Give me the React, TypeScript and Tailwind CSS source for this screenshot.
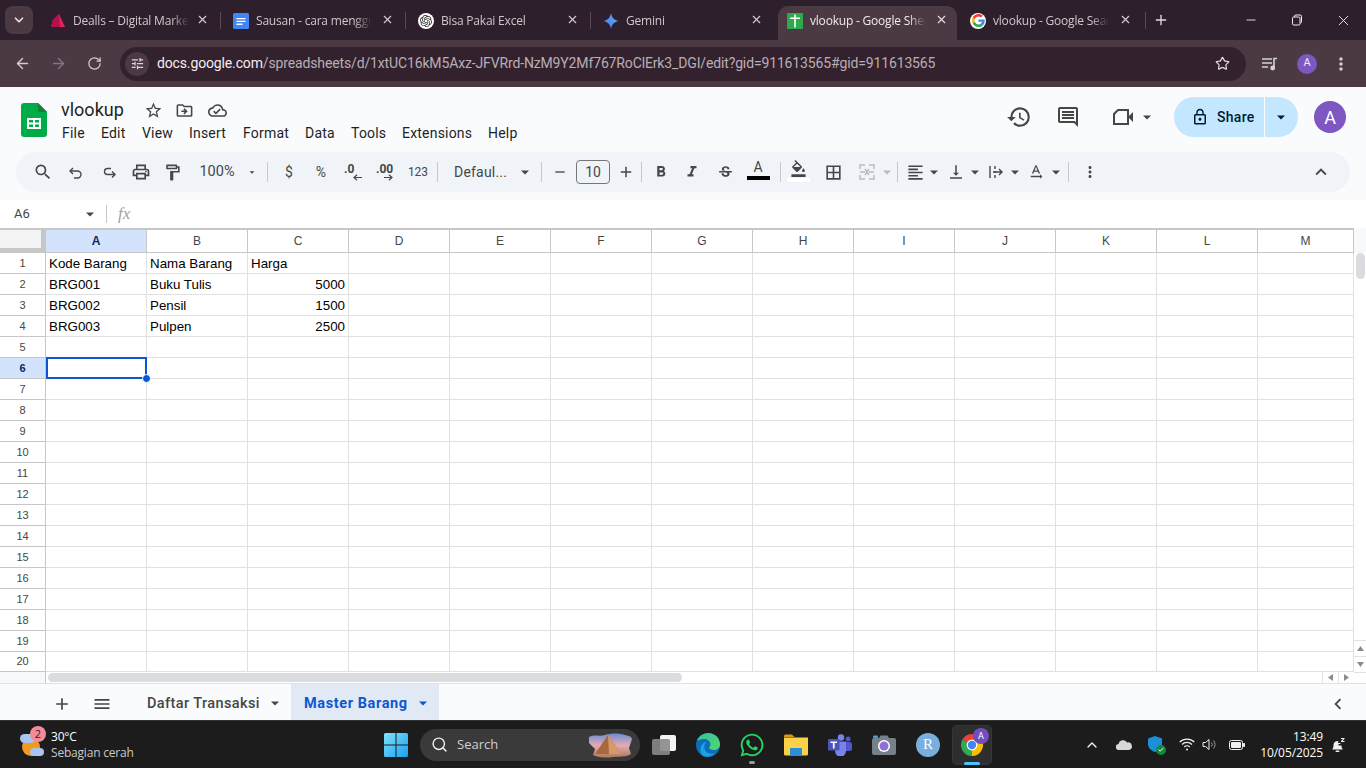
import React from 'react';
import { X, Plus, Minus, ChevronDown, ArrowLeft, ArrowRight, RotateCw, Star, ChevronUp, Search } from 'lucide-react';
import {
  MdOutlinePrint, MdOutlineFormatPaint, MdFormatBold, MdFormatItalic, MdStrikethroughS, MdOutlineFormatColorFill,
  MdBorderAll, MdFormatAlignLeft, MdVerticalAlignBottom, MdMoreVert, MdHistory,
  MdLockOutline, MdAdd, MdMenu, MdChevronLeft, MdStarBorder, MdOutlineDriveFileMove, MdOutlineCloudDone, MdSearch,
  MdTextRotationNone, MdOutlineTune, MdOutlineInsertComment, MdRemove, MdExpandLess,
} from 'react-icons/md';
import { FaWhatsapp } from 'react-icons/fa';
import { SiOpenai } from 'react-icons/si';

const Caret = ({ color = '#444746', className = '' }: { color?: string; className?: string }) => (
  <svg width="10" height="5" viewBox="0 0 10 5" className={className}>
    <path d="M1 .5h8L5 4.500z" fill={color} />
  </svg>
);

const GoogleG = () => (
  <svg viewBox="0 0 48 48" className="w-full h-full">
    <path fill="#EA4335" d="M24 9.5c3.54 0 6.71 1.22 9.21 3.6l6.85-6.85C35.9 2.38 30.47 0 24 0 14.62 0 6.51 5.38 2.56 13.22l7.98 6.19C12.43 13.72 17.74 9.5 24 9.5z" />
    <path fill="#4285F4" d="M46.98 24.55c0-1.57-.15-3.09-.38-4.55H24v9.02h12.94c-.58 2.96-2.26 5.48-4.78 7.18l7.73 6c4.51-4.18 7.09-10.36 7.09-17.65z" />
    <path fill="#FBBC05" d="M10.53 28.59c-.48-1.45-.76-2.99-.76-4.59s.27-3.14.76-4.59l-7.98-6.19C.92 16.46 0 20.12 0 24c0 3.88.92 7.54 2.56 10.78l7.97-6.19z" />
    <path fill="#34A853" d="M24 48c6.48 0 11.93-2.13 15.89-5.81l-7.73-6c-2.15 1.45-4.92 2.3-8.16 2.3-6.26 0-11.57-4.22-13.47-9.91l-7.98 6.19C6.51 42.62 14.62 48 24 48z" />
  </svg>
);

const favicons: Record<string, React.ReactNode> = {
  dealls: (
    <svg width="16" height="16" viewBox="0 0 16 16">
      <path d="M9 1 L15 14 L1 14 L3 7z" fill="#e0245e" />
      <path d="M9 1 L10 14 L1 14 L3 7z" fill="#b3124a" />
    </svg>
  ),
  docs: (
    <svg width="16" height="16" viewBox="0 0 16 16">
      <rect width="16" height="16" rx="1.5" fill="#4285f4" />
      <path d="M3.5 5h9v1.3h-9zM3.5 7.8h9v1.3h-9zM3.5 10.6h6v1.3h-6z" fill="#fff" />
    </svg>
  ),
  gpt: (
    <div className="w-4 h-4 rounded-full bg-white flex items-center justify-center">
      <SiOpenai size={12} color="#2b2b2b" />
    </div>
  ),
  gemini: (
    <svg width="16" height="16" viewBox="0 0 16 16">
      <defs>
        <linearGradient id="gem" x1="0" y1="1" x2="1" y2="0">
          <stop offset="0" stopColor="#3f7fe8" />
          <stop offset="1" stopColor="#6aa5f5" />
        </linearGradient>
      </defs>
      <path d="M8 0c.6 4.5 3.2 7.3 8 8-4.8.7-7.4 3.5-8 8-.6-4.5-3.2-7.3-8-8 4.8-.7 7.4-3.5 8-8z" fill="url(#gem)" />
    </svg>
  ),
  sheets: (
    <svg width="16" height="16" viewBox="0 0 16 16">
      <rect width="16" height="16" rx="1" fill="#2fa84f" />
      <path d="M7.200 1.500h1.600v3H13v1.600H8.800V14.500H7.200V6.100H3V4.500h4.200z" fill="#fff" />
    </svg>
  ),
  google: (
    <div className="w-4 h-4 rounded-full bg-white p-[1.5px]">
      <GoogleG />
    </div>
  ),
};

const tabs = [
  { icon: 'dealls', title: 'Dealls – Digital Marketing', x: 13, close: 13 },
  { icon: 'docs', title: 'Sausan - cara menggunakan', x: 11, close: 13 },
  { icon: 'gpt', title: 'Bisa Pakai Excel', x: 11, close: 13 },
  { icon: 'gemini', title: 'Gemini', x: 11, close: 14 },
  { icon: 'sheets', title: 'vlookup - Google Sheets', x: 10, close: 14, active: true },
  { icon: 'google', title: 'vlookup - Google Search', x: 8, close: 15 },
];

const TabStrip = () => (
  <div className="h-[40px] bg-[#2e1f2c] flex items-start shrink-0 font-['Open_Sans',sans-serif]">
    <div className="ml-[5px] mt-[6px] w-[28px] h-[28px] rounded-[8px] bg-[#4b3944] flex items-center justify-center">
      <ChevronDown size={14} strokeWidth={3} color="#e8e0e4" />
    </div>
    <div className="ml-[4px] flex h-full">
      {tabs.map((t, i) => (
        <div key={t.title} className="relative w-[185px] h-[40px] flex items-center">
          {t.active && <div className="absolute left-[1px] right-[5px] top-[6px] bottom-0 bg-[#4b3944] rounded-t-[10px]" />}
          <div className="relative shrink-0 mt-[1px]" style={{ marginLeft: t.x }}>{favicons[t.icon]}</div>
          <span
            className={`relative ml-[7px] mt-[2px] w-[116px] whitespace-nowrap overflow-hidden text-[12px] tracking-[-0.2px] ${t.active ? 'text-[#f0e9ed]' : 'text-[#cfc6cb]'} [mask-image:linear-gradient(to_right,black_85%,transparent)]`}
          >
            {t.title}
          </span>
          <X size={13} strokeWidth={2} color={t.active ? '#e8e0e4' : '#d8d0d5'} className="absolute top-[13px]" style={{ right: t.close }} />
          {!t.active && i !== 3 && (
            <div className="absolute right-[1px] top-[12px] h-[17px] w-[1px] bg-[#5a4854]" />
          )}
        </div>
      ))}
    </div>
    <div className="ml-[6px] mt-[12px] w-[16px] h-[16px] flex items-center justify-center">
      <Plus size={16} strokeWidth={2} color="#e4dce1" />
    </div>
    <div className="ml-auto flex items-center h-[40px]">
      <div className="w-[46px] flex justify-center"><Minus size={14} strokeWidth={1.5} color="#f2f2f2" /></div>
      <div className="w-[46px] flex justify-center">
        <svg width="12" height="12" viewBox="0 0 12 12" fill="none" stroke="#f2f2f2" strokeWidth="1">
          <rect x="1.5" y="3" width="7.5" height="8" rx="1.2" />
          <path d="M3.5 3V2.2a1.2 1.2 0 0 1 1.2-1.2h4.6a1.2 1.2 0 0 1 1.2 1.2v5.6a1.2 1.2 0 0 1-1.2 1.2" />
        </svg>
      </div>
      <div className="w-[46px] flex justify-center"><X size={17} strokeWidth={1.3} color="#f2f2f2" /></div>
    </div>
  </div>
);

const AddressBar = () => (
  <div className="h-[47px] bg-[#4b3944] shrink-0 flex items-center">
    <div className="w-[44px] flex justify-center"><ArrowLeft size={17} strokeWidth={2} color="#d3cbd0" /></div>
    <div className="w-[28px] flex justify-center"><ArrowRight size={17} strokeWidth={2} color="#85757f" /></div>
    <div className="w-[44px] flex justify-center"><RotateCw size={15} strokeWidth={2} color="#d3cbd0" /></div>
    <div className="ml-[4px] w-[1126px] h-[34px] rounded-full bg-[#33222e] flex items-center">
      <div className="ml-[5px] w-[24px] h-[24px] rounded-full bg-[#4b3944] flex items-center justify-center">
        <MdOutlineTune size={15} color="#ded6da" />
      </div>
      <span className="ml-[8px] text-[14px] font-['Roboto',sans-serif] tracking-[-0.14px] whitespace-nowrap text-[#b9aeb4]">
        <span className="text-[#f3edf0]">docs.google.com</span>/spreadsheets/d/1xtUC16kM5Axz-JFVRrd-NzM9Y2Mf767RoClErk3_DGI/edit?gid=911613565#gid=911613565
      </span>
      <Star size={15} strokeWidth={2} color="#e0d8dd" className="ml-auto mr-[16px]" />
    </div>
    <div className="ml-[16px] w-[16px] flex justify-center">
      <svg width="16" height="14" viewBox="0 0 16 14" fill="none" stroke="#d8d0d5" strokeWidth="1.6">
        <path d="M0 2h10M0 6h10M0 10h6" />
        <path d="M12 11V1.5h3" />
        <circle cx="10.7" cy="11" r="1.6" fill="#d8d0d5" />
      </svg>
    </div>
    <div className="ml-[19px] w-[20px] h-[20px] rounded-full bg-[#7e57c2] text-[#f0e9f7] text-[11px] flex items-center justify-center font-['Roboto',sans-serif]">A</div>
    <div className="ml-[14px]"><MdMoreVert size={20} color="#d8d0d5" /></div>
  </div>
);

const SheetsLogo = () => (
  <svg width="26" height="34" viewBox="0 0 26 34">
    <path d="M3 0h14l9 9v22a3 3 0 0 1-3 3H3a3 3 0 0 1-3-3V3a3 3 0 0 1 3-3z" fill="#00ac47" />
    <path d="M17 0l9 9h-7a2 2 0 0 1-2-2z" fill="#188038" />
    <path d="M6 15h14v11H6z" fill="#fff" />
    <path d="M8 17h4v2.5H8zM14 17h4v2.5h-4zM8 21.5h4V24H8zM14 21.5h4V24h-4z" fill="#00ac47" />
  </svg>
);

const menus = [
  ['File', 39], ['Edit', 41], ['View', 47], ['Insert', 54], ['Format', 62],
  ['Data', 46], ['Tools', 51], ['Extensions', 86], ['Help', 40],
] as const;

const DocHeader = () => (
  <div className="h-[65px] bg-[#f9fbfd] shrink-0 flex font-['Roboto',sans-serif] text-[#1f1f1f]">
    <div className="ml-[21px] mt-[16px]"><SheetsLogo /></div>
    <div className="ml-[14px] mt-[10px]">
      <div className="flex items-center h-[26px]">
        <span className="text-[18px] leading-[26px] w-[84px]">vlookup</span>
        <MdStarBorder size={19} color="#444746" className="ml-[-1px]" />
        <MdOutlineDriveFileMove size={19} color="#444746" className="ml-[12px]" />
        <MdOutlineCloudDone size={19} color="#444746" className="ml-[14px]" />
      </div>
      <div className="flex ml-[1px] text-[14px] leading-[20px] tracking-[0.2px]">
        {menus.map(([m, w]) => (
          <span key={m} className="block" style={{ width: w }}>{m}</span>
        ))}
      </div>
    </div>
    <div className="ml-auto flex items-center h-[60px]">
      <MdHistory size={26} color="#444746" />
      <MdOutlineInsertComment size={24} color="#444746" className="ml-[24px]" />
      <svg width="20" height="16" viewBox="0 0 20 16" className="ml-[33px]">
        <path d="M5 1h10v14H1V5z" fill="none" stroke="#444746" strokeWidth="2" />
        <path d="M15 8l5-5v10z" fill="#444746" />
      </svg>
      <Caret className="ml-[9px]" />
      <div className="ml-[22px] w-[124px] h-[40px] rounded-full bg-[#c2e7ff] flex items-center text-[#001d35]">
        <MdLockOutline size={18} className="ml-[17px]" />
        <span className="ml-[8px] text-[14px] font-medium tracking-[0.3px] w-[47px]">Share</span>
        <div className="w-[1px] h-[40px] bg-[#f9fbfd]" />
        <Caret color="#001d35" className="ml-[11px]" />
      </div>
      <div className="ml-[16px] mr-[20px] w-[32px] h-[32px] rounded-full bg-[#7e57c2] text-white text-[18px] flex items-center justify-center">A</div>
    </div>
  </div>
);

const Sep = () => <div className="w-[1px] h-[20px] bg-[#c7c7c7] shrink-0" />;

const Slot = ({ w, children, className = '' }: { w: number; children?: React.ReactNode; className?: string }) => (
  <div className={`flex items-center justify-center shrink-0 h-full ${className}`} style={{ width: w }}>
    {children}
  </div>
);

const Toolbar = () => {
  const ic = '#444746';
  return (
    <div className="h-[48px] bg-[#f9fbfd] shrink-0 font-['Roboto',sans-serif]">
      <div className="mx-[16px] h-[40px] rounded-full bg-[#f0f4f9] flex items-center text-[#444746] pl-[11px]">
        <Slot w={32}><MdSearch size={20} color={ic} /></Slot>
        <Slot w={34}>
          <svg width="16" height="16" viewBox="0 0 16 16" fill="none" stroke={ic} strokeWidth="1.4" className="mt-[2px]">
            <path d="M5 3 2 6l3 3" /><path d="M2 6h7.5a3.500 3.500 0 0 1 0 7H6" />
          </svg>
        </Slot>
        <Slot w={32}>
          <svg width="16" height="16" viewBox="0 0 16 16" fill="none" stroke={ic} strokeWidth="1.4" className="mt-[2px]">
            <path d="M11 6.500l3 3-3 3" /><path d="M14 9.500H6.500a3 3 0 0 1 0-6H10" />
          </svg>
        </Slot>
        <Slot w={32}><MdOutlinePrint size={20} color={ic} /></Slot>
        <Slot w={30}><MdOutlineFormatPaint size={19} color={ic} /></Slot>
        <Slot w={48} className="text-[14.5px] ml-[2px]"><span className="mr-[-8px]">100%</span></Slot>
        <Slot w={16} className="ml-[2px]"><Caret className="ml-[10px]" /></Slot>
        <div className="ml-[12px]"><Sep /></div>
        <Slot w={42} className="text-[14px]">$</Slot>
        <Slot w={22} className="text-[14px]">%</Slot>
        <Slot w={42}>
          <div className="relative w-[18px] h-[18px] text-[12px] font-bold leading-[12px]">
            <span>.0</span>
            <svg className="absolute left-[9px] top-[11px]" width="9" height="7" viewBox="0 0 9 7" fill="none" stroke={ic} strokeWidth="1.2"><path d="M9 3.500H1M4 .7 1 3.500l3 2.800" /></svg>
          </div>
        </Slot>
        <Slot w={22}>
          <div className="relative w-[18px] h-[18px] text-[12px] font-bold leading-[12px]">
            <span>.00</span>
            <svg className="absolute left-[8px] top-[11px]" width="9" height="7" viewBox="0 0 9 7" fill="none" stroke={ic} strokeWidth="1.2"><path d="M0 3.500h8M5 .7l3 2.800-3 2.800" /></svg>
          </div>
        </Slot>
        <Slot w={44} className="text-[12px]">123</Slot>
        <div className="ml-[-3px]"><Sep /></div>
        <div className="ml-[16px] w-[62px] text-[14px] tracking-[0.2px] whitespace-nowrap">Defaul...</div>
        <Slot w={18}><Caret /></Slot>
        <div className="ml-[7px]"><Sep /></div>
        <Slot w={36}><MdRemove size={16} color={ic} /></Slot>
        <div className="w-[34px] h-[24px] ml-[-2px] rounded-[4px] border border-[#747775] flex items-center justify-center text-[14px]">10</div>
        <Slot w={31}><MdAdd size={18} color={ic} /></Slot>
        <Sep />
        <Slot w={37}><MdFormatBold size={18} color={ic} /></Slot>
        <Slot w={25}><MdFormatItalic size={18} color={ic} /></Slot>
        <Slot w={42}><MdStrikethroughS size={17} color={ic} /></Slot>
        <Slot w={24}>
          <div className="flex flex-col items-center leading-[12px] text-[14px] mt-[-3px]">
            A<div className="w-[23px] h-[4px] bg-black mt-[3px]" />
          </div>
        </Slot>
        <div className="ml-[10px]"><Sep /></div>
        <Slot w={35}>
          <div className="flex flex-col items-center mt-[-3px]">
            <MdOutlineFormatColorFill size={17} color={ic} />
            <div className="w-[23px] h-[4px] bg-white mt-[1px]" />
          </div>
        </Slot>
        <Slot w={35}><MdBorderAll size={19} color={ic} /></Slot>
        <Slot w={31}>
          <svg width="18" height="18" viewBox="0 0 18 18" fill="none" stroke="#b8babc" strokeWidth="1.4">
            <path d="M7 2H2v4M7 16H2v-4M11 2h5v4M11 16h5v-4M2 9h5M16 9h-5M7 6l2 3-2 3M11 6 9 9l2 3" />
          </svg>
        </Slot>
        <Caret color="#b8babc" className="shrink-0" />
        <div className="ml-[5px]"><Sep /></div>
        <Slot w={34}><MdFormatAlignLeft size={19} color={ic} /></Slot>
        <Caret className="shrink-0 ml-[-3px]" />
        <Slot w={27} className="ml-[3px]"><MdVerticalAlignBottom size={18} color={ic} /></Slot>
        <Caret className="shrink-0 ml-[1px]" />
        <Slot w={28} className="ml-[2px]">
          <svg width="16" height="16" viewBox="0 0 16 16" fill="none" stroke={ic} strokeWidth="1.4">
            <path d="M2 2v12M7 2v3M7 7v2M7 11v3M5 8h9M11 5l3 3-3 3" />
          </svg>
        </Slot>
        <Caret className="shrink-0" />
        <Slot w={27} className="ml-[2px]"><MdTextRotationNone size={18} color={ic} /></Slot>
        <Caret className="shrink-0 ml-[2px]" />
        <div className="ml-[7px]"><Sep /></div>
        <Slot w={41}><MdMoreVert size={18} color={ic} /></Slot>
        <div className="ml-auto mr-[18px]"><MdExpandLess size={22} color={ic} /></div>
      </div>
    </div>
  );
};

const FormulaBar = () => (
  <div className="h-[28px] bg-white shrink-0 flex items-center font-['Roboto',sans-serif] text-[#444746]">
    <span className="ml-[14px] w-[71px] text-[13px]">A6</span>
    <Caret />
    <div className="ml-[11px] w-[1px] h-[18px] bg-[#c7c7c7]" />
    <span className="ml-[11px] text-[17px] italic text-[#a0a3a5] font-['Liberation_Serif',serif]">fx</span>
  </div>
);

const columns = ['A', 'B', 'C', 'D', 'E', 'F', 'G', 'H', 'I', 'J', 'K', 'L', 'M'];

const data: Record<number, [string, string, string]> = {
  1: ['Kode Barang', 'Nama Barang', 'Harga'],
  2: ['BRG001', 'Buku Tulis', '5000'],
  3: ['BRG002', 'Pensil', '1500'],
  4: ['BRG003', 'Pulpen', '2500'],
};

const Grid = () => (
  <div className="flex-1 min-h-0 flex font-['Liberation_Sans',Arial,sans-serif]">
    <div className="w-[1354px] shrink-0">
      {/* column headers */}
      <div className="h-[25px] flex border-t-2 border-[#c7c7c7]">
        <div className="relative w-[46px] bg-[#f1f3f4] shrink-0">
          <div className="absolute right-0 top-0 bottom-0 w-[5px] bg-[#c7c7c7]" />
          <div className="absolute left-0 right-0 bottom-0 h-[5px] bg-[#c7c7c7]" />
        </div>
        {columns.map((c) => (
          <div
            key={c}
            className={`${c === 'M' ? 'w-[96px]' : 'w-[101px]'} shrink-0 flex items-center justify-center text-[12px] border-r border-b border-[#c7c7c7] ${c === 'A' ? 'bg-[#d3e3fd] font-bold text-[#0b2a5b]' : 'bg-white text-[#444746]'}`}
          >
            {c}
          </div>
        ))}
      </div>
      {/* rows */}
      {Array.from({ length: 20 }, (_, i) => i + 1).map((r) => (
        <div key={r} className={`${r === 20 ? 'h-[20px]' : 'h-[21px]'} flex`}>
          <div
            className={`w-[46px] shrink-0 flex items-center justify-center text-[11px] border-r border-b border-[#c7c7c7] ${r === 6 ? 'bg-[#d3e3fd] font-bold text-[#0b2a5b]' : 'bg-white text-[#444746]'}`}
          >
            {r}
          </div>
          {columns.map((c, ci) => {
            const value = data[r]?.[ci];
            const numeric = ci === 2 && r > 1;
            return (
              <div
                key={c}
                className={`relative ${c === 'M' ? 'w-[96px]' : 'w-[101px]'} shrink-0 border-r border-b border-[#e1e1e1] px-[3px] text-[13.33px] leading-[21px] text-black whitespace-nowrap ${numeric ? 'text-right' : ''}`}
              >
                {value}
                {r === 6 && ci === 0 && (
                  <>
                    <div className="absolute left-0 top-[-1px] w-[101px] h-[22px] border-2 border-[#0b57d0]" />
                    <div className="absolute left-[96px] top-[16px] w-[9px] h-[9px] rounded-full bg-[#0b57d0] border border-white z-10" />
                  </>
                )}
              </div>
            );
          })}
        </div>
      ))}
      {/* horizontal scrollbar */}
      <div className="h-[12px] flex items-start border-b border-[#e1e1e1]">
        <div className="w-[46px] h-[11px] bg-[#f8f9fa] border-r border-[#c7c7c7] shrink-0" />
        <div className="ml-[2px] mt-[1px] w-[634px] h-[9px] rounded-full bg-[#dadce0]" />
        <div className="ml-auto flex h-[11px]">
          <div className="w-[16px] border-l border-[#e1e1e1] flex items-center justify-center">
            <svg width="5" height="7" viewBox="0 0 5 7"><path d="M5 0v7L0 3.500z" fill="#8a8d8f" /></svg>
          </div>
          <div className="w-[16px] border-l border-[#e1e1e1] flex items-center justify-center">
            <svg width="5" height="7" viewBox="0 0 5 7"><path d="M0 0v7l5-3.500z" fill="#8a8d8f" /></svg>
          </div>
        </div>
      </div>
    </div>
    {/* vertical scrollbar */}
    <div className="flex-1 flex flex-col items-center">
      <div className="h-[25px] w-full bg-[#f8f9fa]" />
      <div className="w-[9px] h-[26px] rounded-full bg-[#dadce0]" />
      <div className="mt-auto w-full h-[16px] border-t border-[#e1e1e1] flex items-center justify-center">
        <svg width="7" height="5" viewBox="0 0 7 5"><path d="M0 5h7L3.500 0z" fill="#8a8d8f" /></svg>
      </div>
      <div className="w-full h-[16px] border-t border-[#e1e1e1] flex items-center justify-center">
        <svg width="7" height="5" viewBox="0 0 7 5"><path d="M0 0h7L3.500 5z" fill="#8a8d8f" /></svg>
      </div>
      <div className="w-full h-[12px] border-t border-b border-[#e1e1e1]" />
    </div>
  </div>
);

const SheetTabs = () => (
  <div className="h-[36px] bg-[#f9fbfd] shrink-0 flex items-center pt-[3px] font-['Roboto',sans-serif] text-[14.5px] font-medium">
    <MdAdd size={20} color="#444746" className="ml-[52px]" />
    <MdMenu size={20} color="#444746" className="ml-[20px]" />
    <span className="ml-[35px] w-[115px] whitespace-nowrap tracking-[0.4px] text-[#444746]">Daftar Transaksi</span>
    <Caret className="ml-[8px]" />
    <div className="ml-[11px] w-[148px] h-[36px] mt-[-3px] pt-[3px] bg-[#e1e9f5] flex items-center text-[#0b57d0] font-bold tracking-[0.6px]">
      <span className="ml-[13px] w-[110px] whitespace-nowrap">Master Barang</span>
      <Caret color="#0b57d0" className="ml-[4px]" />
    </div>
    <MdChevronLeft size={22} color="#444746" className="ml-auto mr-[17px]" />
  </div>
);

const Chrome = () => (
  <svg width="24" height="24" viewBox="0 0 24 24">
    <path d="M12 12 2.470 6.500a11 11 0 0 1 19.060 0z" fill="#ea4335" />
    <path d="M12 12l9.530-5.500A11 11 0 0 1 12 23z" fill="#fbbc04" />
    <path d="M12 12v11A11 11 0 0 1 2.470 6.500z" fill="#34a853" />
    <circle cx="12" cy="12" r="5.400" fill="#fff" />
    <circle cx="12" cy="12" r="4.200" fill="#4285f4" />
  </svg>
);

const Edge = () => (
  <svg width="24" height="24" viewBox="0 0 24 24">
    <defs>
      <linearGradient id="edgeA" x1="0" y1="0" x2="1" y2="1">
        <stop offset="0" stopColor="#35c1a0" />
        <stop offset="1" stopColor="#52d66c" />
      </linearGradient>
    </defs>
    <circle cx="12" cy="12" r="12" fill="#0f6cbd" />
    <path d="M1 8C3 2 9 0 12 0c7 0 12 5 12 11.500 0 3.500-3 5.500-6 5.500-3 0-5-1-5-2.500 0-1 1.500-1 1.500-3C14.500 8 11 6 8 6c-3 0-6 1-7 2z" fill="url(#edgeA)" />
    <path d="M7 23c-3-3-3.500-8-1-11.500C7 10 9 9 10.500 9 8 11 7.500 15 9.500 18c2 2.500 6 3.500 9.500 2-2 2.500-7 5-12 3z" fill="#1aa3e0" />
  </svg>
);

const Folder = () => (
  <svg width="24" height="22" viewBox="0 0 24 22">
    <path d="M0 2a1.500 1.500 0 0 1 1.500-1.500H8L10.500 3H0z" fill="#d99a13" />
    <path d="M0 3.500h24V20a1.500 1.500 0 0 1-1.500 1.500h-21A1.500 1.500 0 0 1 0 20z" fill="#fbd04b" />
    <rect x="6" y="14" width="12" height="7.500" rx="1" fill="#2b8fd8" />
  </svg>
);

const Teams = () => (
  <svg width="24" height="22" viewBox="0 0 24 22">
    <circle cx="13" cy="3.500" r="3.200" fill="#7b83eb" />
    <circle cx="20" cy="5" r="2.500" fill="#5059c9" />
    <rect x="16" y="8" width="8" height="9" rx="2.500" fill="#5059c9" />
    <path d="M7 7.500h11V17a5.500 5.500 0 0 1-11 0z" fill="#7b83eb" />
    <rect x="0" y="5" width="11.500" height="11.500" rx="1.200" fill="#4b53bc" />
    <path d="M2.500 7.500h6.500v1.600H6.600v5.400H4.900V9.100H2.500z" fill="#fff" />
  </svg>
);

const Camera = () => (
  <svg width="24" height="20" viewBox="0 0 24 20">
    <path d="M2 3h5l1.500-2.500h7L17 3h5a2 2 0 0 1 2 2v13a2 2 0 0 1-2 2H2a2 2 0 0 1-2-2V5a2 2 0 0 1 2-2z" fill="#77818a" />
    <rect x="1" y="0.500" width="5" height="2.500" rx="1" fill="#3aa0e8" />
    <circle cx="12" cy="11" r="6" fill="#fff" />
    <circle cx="12" cy="11" r="4.500" fill="#8f6fd8" />
  </svg>
);

const Thumb = () => (
  <svg width="46" height="26" viewBox="0 0 46 26">
    <defs>
      <linearGradient id="sky" x1="0" y1="0" x2="0" y2="1">
        <stop offset="0" stopColor="#6a8fd0" />
        <stop offset="0.5" stopColor="#e6a9b4" />
        <stop offset="1" stopColor="#b07a5a" />
      </linearGradient>
    </defs>
    <path d="M2 5c6-3 10 0 16-2s14-2 20 0c4 1 6 1 7 4l-3 9 2 6c-6 4-12 2-18 3s-14 1-20-2l2-6-6-6z" fill="url(#sky)" />
    <path d="M21 3 34 22H8z" fill="#a8683f" />
    <path d="M21 3 34 22H22z" fill="#d49a6a" />
  </svg>
);

const TaskIcon = ({ children, dot }: { children: React.ReactNode; dot?: boolean }) => (
  <div className="relative w-[44px] h-[48px] flex items-center justify-center shrink-0">
    {children}
    {dot && <div className="absolute bottom-[5px] left-[19px] w-[6px] h-[3px] rounded-full bg-[#9a9a9a]" />}
  </div>
);

const Taskbar = () => (
  <div className="h-[48px] bg-[#1c1c1c] border-t border-[#333] shrink-0 flex items-center text-white font-['Open_Sans',sans-serif]">
    <div className="relative w-[384px] h-full flex items-center shrink-0">
      <div className="relative ml-[20px] w-[24px] h-[24px]">
        <div className="absolute left-[2px] top-[5px] w-[18px] h-[18px] rounded-full bg-[#f29a1f]" />
        <div className="absolute left-0 top-[1px] w-[15px] h-[9px] rounded-full bg-[#a9c4ee]" />
        <div className="absolute left-[10px] top-[15px] w-[14px] h-[8px] rounded-full bg-[#a9c4ee]" />
      </div>
      <div className="absolute left-[30px] top-[5px] w-[16px] h-[16px] rounded-full bg-[#f58b98] text-[#3a1a1e] text-[11px] leading-[16px] text-center">2</div>
      <div className="ml-[7px] text-[12px] leading-[16px] tracking-[-0.2px]">
        <div>30°C</div>
        <div className="text-[#c9c9c9]">Sebagian cerah</div>
      </div>
    </div>
    <svg width="24" height="24" viewBox="0 0 24 24" className="shrink-0">
      <defs>
        <linearGradient id="win" x1="0" y1="0" x2="1" y2="1">
          <stop offset="0" stopColor="#7fe3fb" />
          <stop offset="1" stopColor="#1a9ff0" />
        </linearGradient>
      </defs>
      <path d="M0 1.500A1.500 1.500 0 0 1 1.500 0h10v11.500H0zM12.500 0h10A1.500 1.500 0 0 1 24 1.500v10H12.500zM0 12.500h11.500V24h-10A1.500 1.500 0 0 1 0 22.500zM12.500 12.500H24v10a1.500 1.500 0 0 1-1.500 1.500h-10z" fill="url(#win)" />
    </svg>
    <div className="ml-[12px] w-[220px] h-[32px] rounded-full bg-[#3a3a3a] flex items-center shrink-0">
      <Search size={17} strokeWidth={2} color="#f0f0f0" className="ml-[11px]" />
      <span className="ml-[9px] text-[13px] text-[#d0d0d0]">Search</span>
      <div className="ml-auto mr-[7px]"><Thumb /></div>
    </div>
    <div className="ml-[2px] flex items-center h-full">
      <TaskIcon>
        <div className="relative w-[24px] h-[20px]">
          <div className="absolute right-0 top-0 w-[16px] h-[16px] rounded-[2px] bg-[#f4f4f4]" />
          <div className="absolute left-0 bottom-0 w-[18px] h-[16px] rounded-[2px] bg-[#8a8a8a]/90" />
        </div>
      </TaskIcon>
      <TaskIcon><Edge /></TaskIcon>
      <TaskIcon dot><FaWhatsapp size={26} color="#25d366" /></TaskIcon>
      <TaskIcon><Folder /></TaskIcon>
      <TaskIcon><Teams /></TaskIcon>
      <TaskIcon><Camera /></TaskIcon>
      <TaskIcon>
        <div className="w-[24px] h-[24px] rounded-full bg-[#7aaede] text-white text-[15px] flex items-center justify-center font-['Liberation_Serif',serif]">R</div>
      </TaskIcon>
      <div className="relative w-[40px] h-[40px] ml-[2px] rounded-[5px] bg-[#2e2e2e] border border-[#363636] flex items-center justify-center shrink-0">
        <Chrome />
        <div className="absolute right-[2px] top-[2px] w-[16px] h-[16px] rounded-full bg-[#6f4fc0] text-[9px] leading-[16px] text-center font-['Roboto',sans-serif]">A</div>
        <div className="absolute bottom-[-1px] left-[11px] w-[16px] h-[3px] rounded-full bg-[#4cc2ff]" />
      </div>
    </div>
    <div className="ml-[92px] flex items-center h-full">
      <ChevronUp size={16} strokeWidth={2} color="#f4f4f4" />
      <svg width="16" height="11" viewBox="0 0 16 11" className="ml-[16px]">
        <path d="M3 11a3 3 0 0 1-.4-6A4.500 4.500 0 0 1 11 3.500 3.700 3.700 0 0 1 13 11z" fill="#d8d8d8" />
      </svg>
      <div className="relative ml-[16px] w-[16px] h-[18px]">
        <svg width="14" height="16" viewBox="0 0 14 16"><path d="M7 0l7 2.500V8c0 4-3 6.500-7 8-4-1.500-7-4-7-8V2.500z" fill="#1b8fd8" /></svg>
        <div className="absolute right-[-2px] bottom-[-1px] w-[10px] h-[10px] rounded-full bg-[#0f8a3a] flex items-center justify-center">
          <svg width="6" height="5" viewBox="0 0 6 5" fill="none" stroke="#fff" strokeWidth="1"><path d="M.5 2.500l1.700 1.700L5.500.8" /></svg>
        </div>
      </div>
      <svg width="16" height="13" viewBox="0 0 16 13" fill="none" stroke="#f0f0f0" strokeWidth="1.200" className="ml-[15px]">
        <path d="M.7 4a10.500 10.500 0 0 1 14.600 0M3 6.500a7 7 0 0 1 10 0M5.300 9a3.500 3.500 0 0 1 5.400 0" />
        <circle cx="8" cy="11.500" r="1" fill="#f0f0f0" stroke="none" />
      </svg>
      <svg width="16" height="13" viewBox="0 0 16 13" fill="none" stroke="#f0f0f0" strokeWidth="1" className="ml-[7px]">
        <path d="M1 4.500h2.500L7 1.500v10l-3.500-3H1z" />
        <path d="M9.500 4.500a3 3 0 0 1 0 4M11.500 2.500a6 6 0 0 1 0 8" stroke="#9a9a9a" />
      </svg>
      <svg width="16" height="10" viewBox="0 0 16 10" className="ml-[11px]">
        <rect x="0.500" y="0.500" width="13" height="9" rx="2" fill="none" stroke="#f0f0f0" />
        <rect x="2" y="2" width="10" height="6" rx="1" fill="#f0f0f0" />
        <rect x="14" y="3" width="2" height="4" rx="0.800" fill="#f0f0f0" />
      </svg>
    </div>
    <div className="ml-auto flex items-center">
      <div className="text-right text-[12px] leading-[16px] tracking-[-0.1px]">
        <div>13:49</div>
        <div>10/05/2025</div>
      </div>
      <svg width="16" height="16" viewBox="0 0 16 16" className="ml-[7px] mr-[20px]" fill="#f0f0f0">
        <path d="M2 12.500c1-1 1.500-2 1.500-4.500a4 4 0 0 1 6-3.500H8v1.500h2.500V7H8.500V8.500h3c0 2 .5 3 1.500 4z" />
        <rect x="5.500" y="13.500" width="4" height="1.500" rx="0.700" />
        <path d="M11 1h3.500v1L12.500 4h2v1H11V4l2-2h-2z" />
      </svg>
    </div>
  </div>
);

export default function App() {
  return (
    <div className="w-[1366px] h-[768px] overflow-hidden flex flex-col bg-white">
      <TabStrip />
      <AddressBar />
      <DocHeader />
      <Toolbar />
      <FormulaBar />
      <Grid />
      <SheetTabs />
      <Taskbar />
    </div>
  );
}
